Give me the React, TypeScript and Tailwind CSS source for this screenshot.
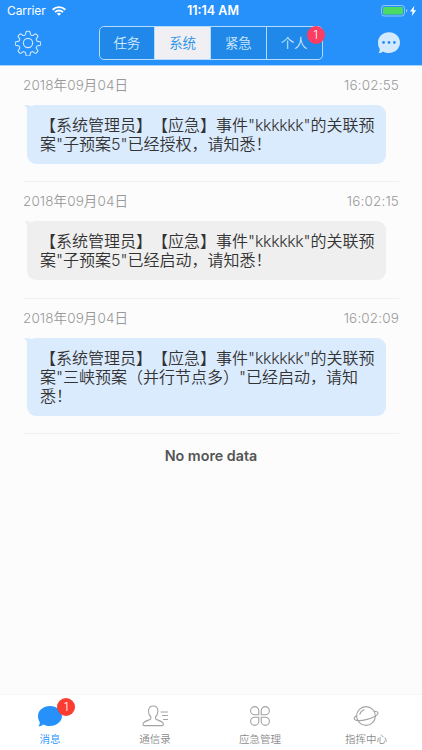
import React, { useState } from 'react';
import clsx from 'clsx';

interface Message {
    id: number;
    date: string;
    time: string;
    unread: boolean;
    lines: string[];
}

const messages: Message[] = [
    {
        id: 1,
        date: '2018年09月04日',
        time: '16:02:55',
        unread: true,
        lines: ['【系统管理员】【应急】事件"kkkkkk"的关联预', '案"子预案5"已经授权，请知悉！'],
    },
    {
        id: 2,
        date: '2018年09月04日',
        time: '16:02:15',
        unread: false,
        lines: ['【系统管理员】【应急】事件"kkkkkk"的关联预', '案"子预案5"已经启动，请知悉！'],
    },
    {
        id: 3,
        date: '2018年09月04日',
        time: '16:02:09',
        unread: true,
        lines: ['【系统管理员】【应急】事件"kkkkkk"的关联预', '案"三峡预案（并行节点多）"已经启动，请知', '悉！'],
    },
];

const segments = ['任务', '系统', '紧急', '个人'];

const GearIcon = () => (
    <svg width="26" height="26" viewBox="0 0 26 26" fill="none" stroke="#d3e9ff" strokeWidth="1.1" strokeLinejoin="round">
        <path d="M10.6 4.2 11 2q.2-.8 1-.8h2q.8 0 1 .8l.4 2.2q.2.7.9 1l.6.2q.7.3 1.3-.1l1.7-1.2q.7-.4 1.3.1l1.4 1.4q.5.6.1 1.3l-1.2 1.7q-.4.6-.1 1.3l.3.7q.3.7 1 .8l2.2.4q.8.2.8 1v1.6q0 .8-.8 1l-2.2.4q-.7.1-1 .8l-.3.7q-.3.7.1 1.3l1.2 1.7q.4.7-.1 1.3l-1.4 1.4q-.6.5-1.3.1l-1.7-1.2q-.6-.4-1.3-.1l-.6.2q-.7.3-.9 1l-.4 2.2q-.2.8-1 .8h-2q-.8 0-1-.8l-.4-2.2q-.2-.7-.9-1l-.6-.2q-.7-.3-1.300.1l-1.700 1.200q-.7.400-1.300-.1l-1.400-1.400q-.5-.6-.1-1.300l1.200-1.700q.4-.6.1-1.300l-.3-.7q-.3-.7-1-.8l-2.200-.4q-.8-.2-.8-1v-1.600q0-.8.8-1l2.200-.4q.7-.1 1-.8l.3-.7q.3-.7-.1-1.300l-1.200-1.700q-.4-.7.1-1.300l1.400-1.400q.6-.5 1.300-.1l1.700 1.200q.6.400 1.300.1l.6-.2q.7-.3.900-1z" />
        <circle cx="13" cy="13" r="4.6" />
    </svg>
);

const WifiIcon = () => (
    <svg width="14" height="10" viewBox="0 0 14 10" fill="none" stroke="#fff" strokeWidth="1.9">
        <path d="M.7 3.7a9 9 0 0 1 12.6 0" />
        <path d="M3 6.1a5.8 5.8 0 0 1 8 0" />
        <path d="M7 9.8 4.9 7.7a3 3 0 0 1 4.2 0z" fill="#fff" stroke="none" />
    </svg>
);

const BatteryIcon = () => (
    <svg width="36" height="12" viewBox="0 0 36 12">
        <rect x=".5" y=".5" width="23" height="10.5" rx="2.6" fill="none" stroke="#8fc5fb" />
        <rect x="2" y="2" width="20" height="7.5" rx="1.2" fill="#4cd964" />
        <path d="M25 4v3.5q1.4-.5 1.4-1.75T25 4z" fill="#8fc5fb" />
        <path d="M33.4.8 29 6.5h2.6L30.8 11l4.4-5.8h-2.6z" fill="#fff" />
    </svg>
);

const ChatDotsIcon = () => (
    <svg width="24" height="24" viewBox="0 0 24 24">
        <path d="M12 1.2c6.3 0 11 4.6 11 10.4S18.3 22 12 22c-2.2 0-4.2-.5-5.9-1.5-1.3 1-2.9 1.7-4.6 1.7.9-1.2 1.3-2.5 1.2-4.1C1.5 16.3 1 14 1 11.6 1 5.8 5.7 1.2 12 1.2z" fill="#d3e9ff" />
        <g fill="#2791fb">
            <circle cx="6.6" cy="11.5" r="1.4" />
            <circle cx="12" cy="11.5" r="1.4" />
            <circle cx="17.4" cy="11.5" r="1.4" />
        </g>
    </svg>
);

const MessageIcon = () => (
    <svg width="26" height="24" viewBox="0 0 26 24">
        <path d="M13 2c6.7 0 12 4.4 12 10s-5.3 10-12 10c-2.5 0-4.7-.6-6.6-1.6-1.4 1-3 1.8-5 1.9 1-1.4 1.5-2.7 1.3-4.3C1.6 16.4 1 14.3 1 12 1 6.4 6.3 2 13 2z" fill="#2791fb" />
    </svg>
);

const ContactsIcon = () => (
    <svg width="26" height="24" viewBox="0 0 26 24" fill="none" stroke="#a3a3a3" strokeWidth="1.1" strokeLinejoin="round" strokeLinecap="round">
        <path d="M11.2 2c-3.1 0-4.7 2.1-4.7 5.1 0 2.3.8 4.4 2.3 5.6v2.1c0 1.3-7.8 1.8-7.8 5.7 0 .8.3 1.1 1 1.1h18.4c.7 0 1-.3 1-1.1 0-3.900-7.800-4.400-7.800-5.700v-2.100c1.500-1.200 2.300-3.300 2.300-5.600C15.900 4.100 14.300 2 11.200 2z" />
        <path d="M19 8H25.500M20.500 11.500H25.500M21.500 15.500H25.500" />
    </svg>
);

const AppsIcon = () => (
    <svg width="20" height="20" viewBox="0 0 20 20" fill="none" stroke="#a3a3a3" strokeWidth="1.1">
        <path d="M8.8 8.8V4.7a4.1 4.1 0 1 0-4.1 4.1z" />
        <path d="M11.2 8.8V4.7a4.1 4.1 0 1 1 4.1 4.1z" />
        <path d="M8.8 11.2v4.1a4.1 4.1 0 1 1-4.1-4.1z" />
        <path d="M11.2 11.2v4.1a4.1 4.1 0 1 0 4.1-4.1z" />
    </svg>
);

const PlanetIcon = () => (
    <svg width="26" height="22" viewBox="0 0 26 22" fill="none" stroke="#a3a3a3" strokeWidth="1.1" strokeLinecap="round">
        <circle cx="13" cy="11" r="9.4" />
        <path d="M21.5 6.6c2-.2 3.3.1 3.5 1.1.5 2.1-4.3 5-11 6.7S1.7 16 1.2 13.9c-.2-1 .7-2.2 2.4-3.4" />
        <path d="M6.8 9.3c.6-2.2 2.1-3.9 4.3-4.6" />
    </svg>
);

const tabs = [
    { label: '消息', icon: <MessageIcon />, badge: 1, width: 'w-[100px]' },
    { label: '通信录', icon: <ContactsIcon />, width: 'w-[110px]' },
    { label: '应急管理', icon: <AppsIcon />, width: 'w-[100px]' },
    { label: '指挥中心', icon: <PlanetIcon />, width: 'w-[112px]' },
];

// the event name is set tighter than the Chinese text around it
const renderLine = (line: string) =>
    line.split(/(kkkkkk)/).map((part, i) => (
        part === 'kkkkkk' ? <span key={i} className="tracking-[-0.4px]">{part}</span> : part
    ));

const MessageRow: React.FC<{ message: Message }> = ({ message }) => {
    const fill = message.unread ? 'bg-[#dbebfe]' : 'bg-[#efefef]';

    return (
        <div className="mx-[23px] border-b border-[#f1f1f1] pt-[10px] pb-[17.25px]">
            <div className="flex h-[18px] items-center justify-between text-[13.5px] leading-[18px] text-[#999]">
                <span className="tracking-[0.1px]">{message.date}</span>
                <span className="tracking-[0.15px]">{message.time}</span>
            </div>
            <div className={clsx('relative mt-[11px] ml-1 w-[359px] rounded-[9px] rounded-tl-none pt-[11px] pr-2 pb-[10px] pl-[13px]', fill)}>
                <svg className="absolute top-0 -left-[3px]" width="12" height="8" viewBox="0 0 12 8">
                    <path d="M0 .3 4 0v8C3.4 5 2.6 2.2 0 .3z" fill={message.unread ? '#dbebfe' : '#efefef'} />
                    <path d="M4.5 0h6C9 1.3 6 1.3 4.5 0z" fill="#fcfcfc" />
                </svg>
                {message.lines.map(line => (
                    <p key={line} className="h-[19px] text-[16px] leading-[19px] whitespace-nowrap text-[#333] [text-spacing-trim:space-all]">
                        {renderLine(line)}
                    </p>
                ))}
            </div>
        </div>
    );
};

export default function App() {
    const [active, setActive] = useState(1);
    const [tab, setTab] = useState(0);

    return (
        <div lang="zh-CN" className="flex h-[750px] w-[422px] flex-col bg-[#fcfcfc] font-[Inter,'Noto_Sans_CJK_SC',sans-serif] [font-weight:350]">
            <header className="h-[66px] shrink-0 border-b border-[#a9d4fd] bg-[#2791fb]">
                <div className="grid h-[22px] grid-cols-3 items-center pr-[5px] pl-[7px] text-[12px] text-white">
                    <div className="flex items-center gap-[6px]">
                        <span className="font-normal tracking-[-0.1px]">Carrier</span>
                        <WifiIcon />
                    </div>
                    <span className="pl-[2px] text-center text-[12.5px] font-semibold">11:14 AM</span>
                    <div className="flex justify-end">
                        <BatteryIcon />
                    </div>
                </div>
                <div className="flex items-start justify-between pr-[21px] pl-[15px]">
                    <button className="mt-2">
                        <GearIcon />
                    </button>
                    <div className="relative mt-1 ml-[3px] flex h-[34px] w-[224px] rounded-[5px] border border-[#b7dbfd] bg-[#1f88e8]">
                        {segments.map((label, i) => (
                            <button
                                key={label}
                                onClick={() => setActive(i)}
                                className={clsx(
                                    'flex-1 text-[13.5px]',
                                    i > 0 && 'border-l border-[#b7dbfd]',
                                    i === active ? 'bg-[#efeff4] text-[#2791e6]' : 'text-[#d3e9ff]'
                                )}
                            >
                                {label}
                            </button>
                        ))}
                        <span className="absolute -top-[1px] -right-[3px] flex size-[18px] items-center justify-center rounded-full bg-[#fb3d63] text-[12px] text-white">1</span>
                    </div>
                    <button className="mt-[9px]">
                        <ChatDotsIcon />
                    </button>
                </div>
            </header>

            <main className="flex-1">
                {messages.map(message => (
                    <MessageRow key={message.id} message={message} />
                ))}
                <p className="mt-3 text-center text-[14.3px] leading-5 font-semibold text-[#555]">No more data</p>
            </main>

            <nav className="flex h-[56px] shrink-0 border-t border-[#f7f7f7] bg-white">
                {tabs.map((item, i) => (
                    <button key={item.label} onClick={() => setTab(i)} className={clsx('flex flex-col items-center pt-[9px]', item.width)}>
                        <span className="relative flex h-6 items-center">
                            {item.icon}
                            {item.badge && (
                                <span className="absolute -top-[6px] left-[20px] flex size-[18px] items-center justify-center rounded-full bg-[#fc3b31] text-[12px] text-white">
                                    {item.badge}
                                </span>
                            )}
                        </span>
                        <span className={clsx('mt-[5px] text-[10.5px] leading-[14px]', i === tab ? 'text-[#2791fb]' : 'text-[#8c8c8c]')}>{item.label}</span>
                    </button>
                ))}
            </nav>
        </div>
    );
}
